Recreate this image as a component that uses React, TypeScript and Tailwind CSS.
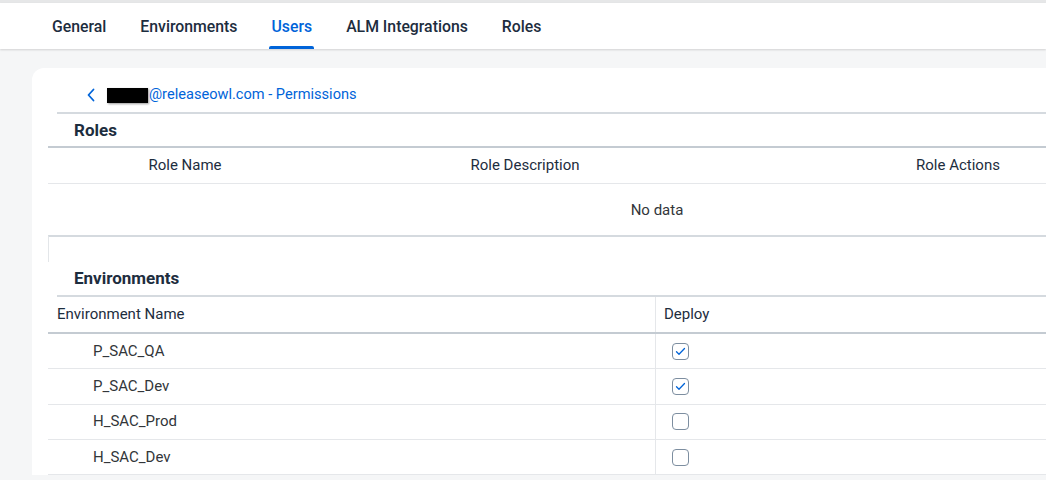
import React from "react";

const tabs = ["General", "Environments", "Users", "ALM Integrations", "Roles"];

const environments = [
  { name: "P_SAC_QA", deploy: true },
  { name: "P_SAC_Dev", deploy: true },
  { name: "H_SAC_Prod", deploy: false },
  { name: "H_SAC_Dev", deploy: false },
];

function Checkbox({ checked }: { checked: boolean }) {
  return (
    <div className="flex h-[17px] w-[17px] items-center justify-center rounded-[4px] border border-[#7d8ea0] bg-white">
      {checked && (
        <svg width="11" height="9" viewBox="0 0 11 9" fill="none">
          <path
            d="M1.5 4.8 L4 7.2 L9.5 1.5"
            stroke="#0064d9"
            strokeWidth="1.3"
            strokeLinecap="round"
            strokeLinejoin="round"
          />
        </svg>
      )}
    </div>
  );
}

export default function App() {
  return (
    <div className="h-[480px] w-[1046px] overflow-hidden bg-[#f5f6f7] font-['Roboto',sans-serif] text-[#1d2d3e]">
      {/* top tab bar */}
      <div className="h-[3px] bg-[#e6e7e8]" />
      <div className="relative z-10 flex h-[46px] gap-[34px] bg-white pl-[52px] shadow-[0_1px_2px_rgba(0,0,0,0.15)]">
        {tabs.map((tab) => (
          <div
            key={tab}
            className={`relative flex items-center pt-[2px] text-[15.8px] font-medium ${
              tab === "Users" ? "text-[#0064d9]" : "text-[#1d2d3e]"
            }`}
          >
            {tab}
            {tab === "Users" && (
              <span className="absolute -right-[2px] bottom-0 -left-[2px] h-[3px] rounded-t-[2px] bg-[#0064d9]" />
            )}
          </div>
        ))}
      </div>

      {/* card */}
      <div className="mt-[19px] ml-[32px] w-[1240px] rounded-tl-[12px] bg-white pl-[16px]">
        {/* title */}
        <div className="flex h-[44px] items-center pt-[10px] pl-[38px]">
          <svg width="10" height="14" viewBox="0 0 10 14" fill="none">
            <path
              d="M7.5 1.5 L2.5 7 L7.5 12.5"
              stroke="#0064d9"
              strokeWidth="1.8"
              strokeLinecap="round"
              strokeLinejoin="round"
            />
          </svg>
          <span className="ml-[11px] h-[15px] w-[41px] bg-black shadow-[1px_1px_2px_rgba(0,0,0,0.4)]" />
          <span className="ml-[1px] text-[14.6px] text-[#0064d9]">
            @releaseowl.com - Permissions
          </span>
        </div>

        {/* Roles */}
        <div className="ml-[9px] flex h-[34px] items-center border-t-2 border-[#d5dadf] pt-[1px] pl-[17px] text-[17px] font-bold">
          Roles
        </div>
        <div className="border-t-2 border-[#c4cbd2]">
          <div className="flex h-[36px] items-center border-b border-[#e5e7ea] text-[15px]">
            <div className="w-[274px] text-center">Role Name</div>
            <div className="w-[406px] text-center">Role Description</div>
            <div className="w-[460px] text-center">Role Actions</div>
          </div>
          <div className="flex h-[51px] items-center justify-center pr-[6px] pt-[1px] text-[15px] text-[#32363a]">
            No data
          </div>
        </div>
        <div className="h-[27px] border-t-2 border-l border-[#d5dadf] border-l-[#e3e6e9]" />

        {/* Environments */}
        <div className="ml-[9px] flex h-[35px] items-center border-b-2 border-[#d5dadf] pl-[17px] text-[17px] font-bold">
          Environments
        </div>
        <div className="text-[15px]">
          <div className="flex h-[37px] border-b-2 border-[#c4cbd2]">
            <div className="flex w-[607px] items-center pl-[9px]">
              Environment Name
            </div>
            <div className="flex flex-1 items-center border-l border-[#e5e7ea] pl-[8px]">
              Deploy
            </div>
          </div>
          {environments.map((env) => (
            <div
              key={env.name}
              className="flex h-[35.3px] border-b border-[#e5e7ea] text-[#32363a]"
            >
              <div className="flex w-[607px] items-center pl-[45px]">
                {env.name}
              </div>
              <div className="flex flex-1 items-center border-l border-[#e5e7ea] pl-[16px]">
                <Checkbox checked={env.deploy} />
              </div>
            </div>
          ))}
        </div>
      </div>
    </div>
  );
}
